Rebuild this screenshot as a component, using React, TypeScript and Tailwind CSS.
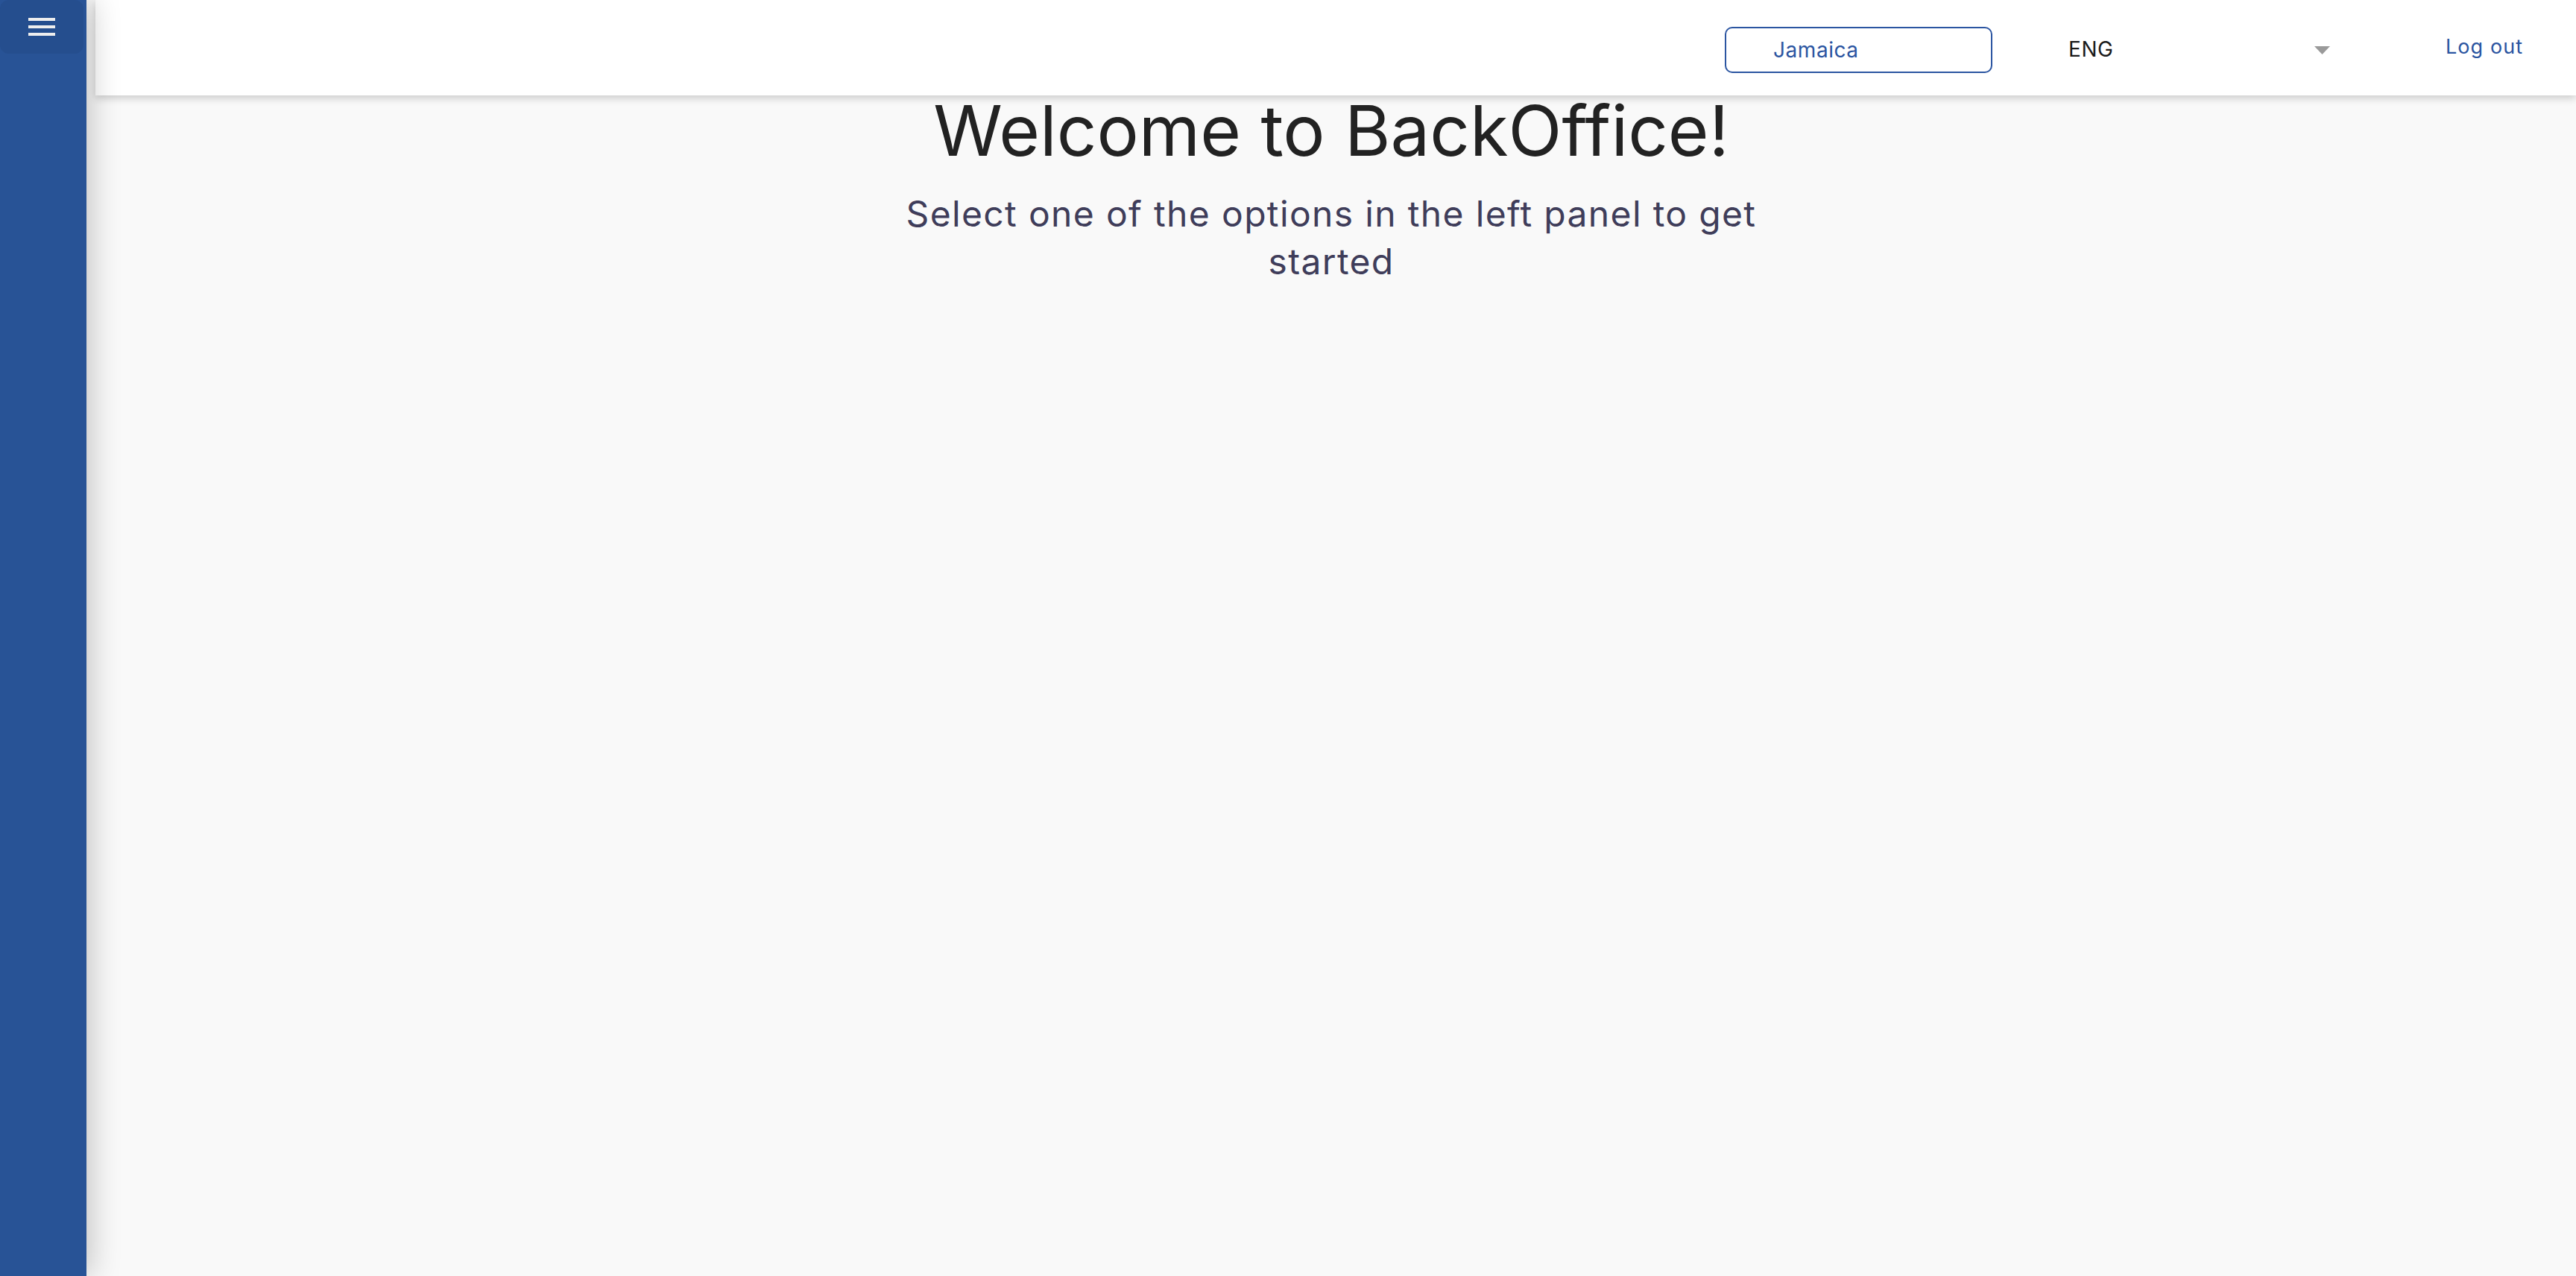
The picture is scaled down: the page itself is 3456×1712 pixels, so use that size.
const font = { fontFamily: "Inter, 'Noto Sans', sans-serif" };

const Sidebar = () => (
  <aside className="relative z-20 w-[116px] shrink-0 bg-[#285396] shadow-[6px_0_40px_rgba(0,0,0,0.22)]">
    <button className="flex h-[72px] w-[112px] flex-col items-center justify-center gap-[6px] rounded-[12px] bg-[#254e8e]">
      <span className="block h-[4px] w-[36px] bg-[#eeeeee]" />
      <span className="block h-[4px] w-[36px] bg-[#eeeeee]" />
      <span className="block h-[4px] w-[36px] bg-[#eeeeee]" />
    </button>
  </aside>
);

const Header = () => (
  <header className="relative z-10 ml-3 flex h-[128px] items-center justify-end bg-white pr-[68px] shadow-[0_4px_10px_rgba(0,0,0,0.18)]">
    <div className="mt-[5px] flex h-[62px] w-[359px] items-center rounded-[10px] border-2 border-[#2b55a1] pl-[63px] text-[28px] tracking-[0.02em] text-[#2b55a1]">
      Jamaica
    </div>
    <div className="ml-[102px] flex w-[351px] items-center justify-between pt-[4px] text-[28px] tracking-[0.02em] text-[#1a1a1a]">
      <span>ENG</span>
      <svg width="21" height="11" viewBox="0 0 21 11" className="mt-[2px]">
        <polygon points="0,0 21,0 10.5,11" fill="#9a9a9a" />
      </svg>
    </div>
    <a className="ml-[155px] -mt-[2px] w-[107px] whitespace-nowrap text-[27px] tracking-[0.04em] text-[#2b55a1]">
      Log out
    </a>
  </header>
);

export default function App() {
  return (
    <div className="flex h-screen w-full overflow-hidden bg-[#f9f9f9]" style={font}>
      <Sidebar />
      <div className="flex flex-1 flex-col">
        <Header />
        <main className="flex flex-col items-center">
          <h1 className="text-[94px] font-normal leading-none text-[#222222]">
            Welcome to BackOffice!
          </h1>
          <p className="mt-[33px] max-w-[1200px] text-center text-[48px] leading-[64px] tracking-[0.028em] text-[#3f3d5a]">
            Select one of the options in the left panel to get started
          </p>
        </main>
      </div>
    </div>
  );
}
